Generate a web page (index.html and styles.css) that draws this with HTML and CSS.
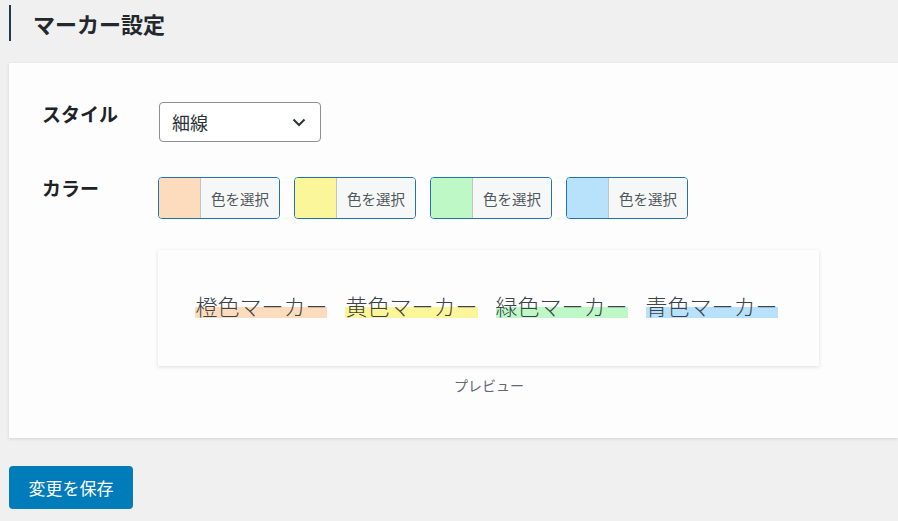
FILE: index.html
```html
<!DOCTYPE html>
<html lang="ja">
<head>
    <meta charset="UTF-8">
    <title>マーカー設定</title>
    <link rel="stylesheet" href="styles.css">
</head>
<body>
    <div class="wrap">
        <h2 class="section-title">マーカー設定</h2>

        <div class="card">
            <div class="form-row">
                <div class="form-label">スタイル</div>
                <div class="form-field">
                    <div class="select">
                        <span>細線</span>
                        <svg width="14" height="9" viewBox="0 0 14 9"><path d="M1.5 1.5 L7 7 L12.5 1.5" fill="none" stroke="#2c3338" stroke-width="2"/></svg>
                    </div>
                </div>
            </div>

            <div class="form-row row-color">
                <div class="form-label">カラー</div>
                <div class="form-field">
                    <div class="swatches">
                        <div class="swatch"><span class="swatch-color c-orange"></span><span class="swatch-btn">色を選択</span></div>
                        <div class="swatch"><span class="swatch-color c-yellow"></span><span class="swatch-btn">色を選択</span></div>
                        <div class="swatch"><span class="swatch-color c-green"></span><span class="swatch-btn">色を選択</span></div>
                        <div class="swatch"><span class="swatch-color c-blue"></span><span class="swatch-btn">色を選択</span></div>
                    </div>

                    <div class="preview">
                        <span class="marker m-orange">橙色マーカー</span>
                        <span class="marker m-yellow">黄色マーカー</span>
                        <span class="marker m-green">緑色マーカー</span>
                        <span class="marker m-blue">青色マーカー</span>
                    </div>
                    <div class="preview-caption">プレビュー</div>
                </div>
            </div>
        </div>

        <button class="button-primary">変更を保存</button>
    </div>
</body>
</html>
```

FILE: styles.css
```css
body {
    margin: 0;
    background-color: #f0f0f1;
    font-family: "Noto Sans CJK JP", "Noto Sans", sans-serif;
    color: #1d2327;
    overflow: hidden;
}
.wrap {
    padding-left: 9px;
}
.section-title {
    margin: 5px 0 0;
    height: 36px;
    line-height: 36px;
    border-left: 2px solid #1d3a4f;
    padding-left: 22px;
    font-size: 22px;
    font-weight: 700;
    color: #23282d;
}
.card {
    margin-top: 22px;
    background: #fdfdfd;
    box-shadow: 0 1px 3px rgba(0, 0, 0, 0.12);
    padding: 39px 0 43px 33px;
}
.form-row {
    display: flex;
    align-items: flex-start;
}
.row-color {
    margin-top: 35px;
}
.form-label {
    width: 117px;
    flex-shrink: 0;
    font-size: 19px;
    font-weight: 700;
    line-height: 24px;
    color: #1d2327;
}
.row-color .form-label {
    margin-top: -1px;
}
.form-field {
    width: 660px;
}
.select {
    width: 162px;
    height: 40px;
    box-sizing: border-box;
    border: 1px solid #8c8f94;
    border-radius: 4px;
    background: #fff;
    display: flex;
    align-items: center;
    justify-content: space-between;
    padding: 0 14px 0 12px;
    font-size: 18px;
    color: #2c3338;
}
.swatches {
    display: flex;
    gap: 14px;
    margin-left: -1px;
}
.swatch {
    display: flex;
    width: 122px;
    height: 42px;
    box-sizing: border-box;
    border: 1px solid #2271b1;
    border-radius: 4px;
    overflow: hidden;
}
.swatch-color {
    width: 41px;
    border-right: 1px solid #c3c4c7;
}
.swatch-btn {
    flex: 1;
    background: #f6f7f7;
    font-size: 14.5px;
    color: #50575e;
    display: flex;
    align-items: center;
    justify-content: center;
}
.c-orange { background: #fddcbd; }
.c-yellow { background: #fcf69b; }
.c-green { background: #bdf8c6; }
.c-blue { background: #b8e2fc; }
.preview {
    margin: 31px 0 0 -1px;
    height: 116px;
    background: #fdfdfd;
    box-shadow: 0 1px 4px rgba(0, 0, 0, 0.13);
    display: flex;
    align-items: center;
    justify-content: center;
    gap: 18px;
    padding: 0 4px 6px 0;
    box-sizing: border-box;
}
.marker {
    font-size: 22px;
    font-weight: 300;
    line-height: 26px;
    color: #3c434a;
}
.m-orange { background: linear-gradient(transparent 58%, #fddcbd 58%); }
.m-yellow { background: linear-gradient(transparent 58%, #fcf69b 58%); }
.m-green { background: linear-gradient(transparent 58%, #bdf8c6 58%); }
.m-blue { background: linear-gradient(transparent 58%, #b8e2fc 58%); }
.preview-caption {
    margin-top: 9px;
    text-align: center;
    font-size: 14px;
    line-height: 20px;
    color: #646970;
}
.button-primary {
    margin-top: 28px;
    width: 124px;
    height: 43px;
    border: none;
    border-radius: 4px;
    background: #007cba;
    color: #fff;
    font-family: "Noto Sans CJK JP", sans-serif;
    font-size: 17px;
    cursor: pointer;
}
```
